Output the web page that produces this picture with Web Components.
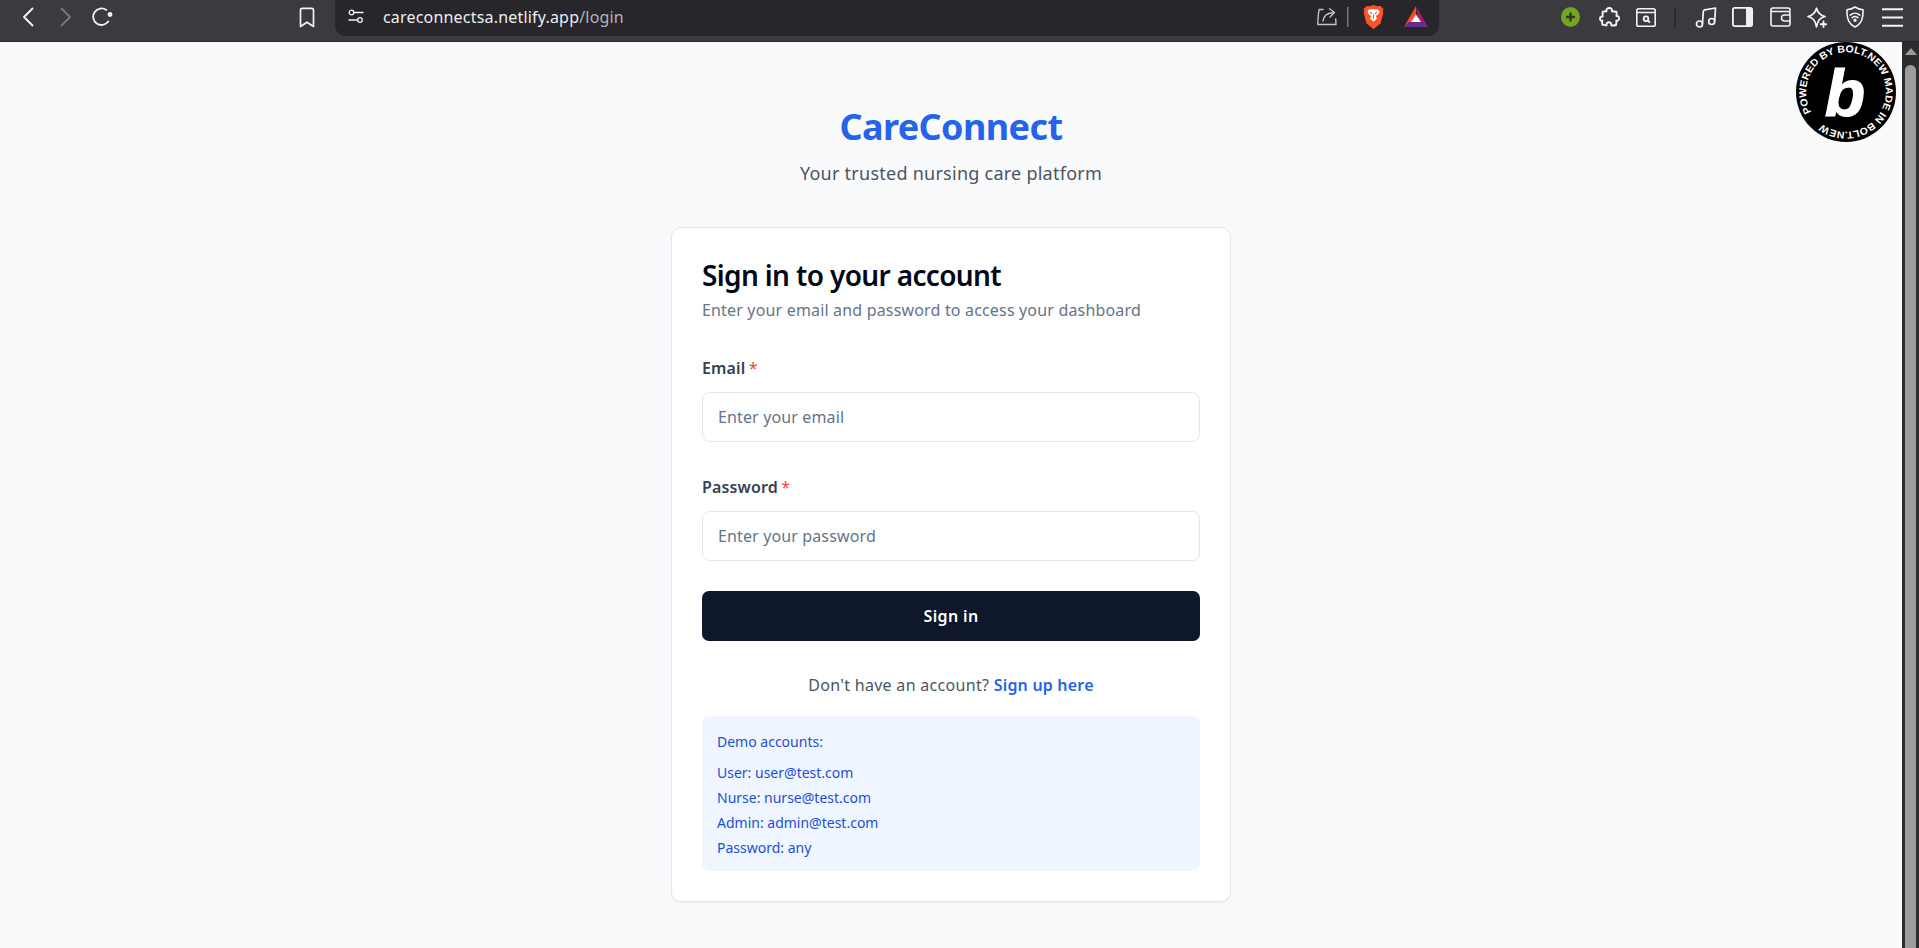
<!DOCTYPE html>
<html lang="en"><head><meta charset="utf-8"><title>CareConnect</title>
<style>
html,body{margin:0;height:948px;overflow:hidden;background:#f9fafb}
body{font-family:"Noto Sans","Open Sans",sans-serif}
</style></head><body>
<app-shell>
  <browser-toolbar slot="toolbar" url="careconnectsa.netlify.app" path="/login"></browser-toolbar>
  <login-page>
    <login-card heading="Sign in to your account" description="Enter your email and password to access your dashboard">
      <form-field label="Email" placeholder="Enter your email"></form-field>
      <form-field label="Password" placeholder="Enter your password"></form-field>
      <primary-button>Sign in</primary-button>
      <signup-prompt></signup-prompt>
      <demo-accounts></demo-accounts>
    </login-card>
  </login-page>
  <page-scrollbar slot="scroll"></page-scrollbar>
  <bolt-badge slot="badge"></bolt-badge>
</app-shell>
<script>
function def(name,html){
  customElements.define(name,class extends HTMLElement{
    connectedCallback(){
      if(this.shadowRoot)return;
      const r=this.attachShadow({mode:'open'});
      r.innerHTML=typeof html==='function'?html(this):html;
    }
  });
}
const S='fill="none" stroke="currentColor" stroke-linecap="round" stroke-linejoin="round"';
def('app-shell',`<style>
:host{display:grid;grid-template-rows:42px 906px;grid-template-columns:1fr 17px;width:1919px;height:948px;position:relative}
.top{grid-column:1/3}
.badge{position:absolute;left:1796px;top:42px}
</style>
<div class="top"><slot name="toolbar"></slot></div>
<div><slot></slot></div>
<slot name="scroll"></slot>
<div class="badge"><slot name="badge"></slot></div>`);

def('browser-toolbar',h=>`<style>
:host{display:flex;height:41px;background:#3a3a3f;border-bottom:1px solid #2a2a2e;color:#f4f4f6;font-family:"Noto Sans",sans-serif}
svg{display:block;flex:none}
.nav{display:flex;align-items:center;width:335px;height:34px;flex:none}
.bar{display:flex;align-items:center;width:1104px;height:36px;flex:none;background:#26262b;border-radius:0 0 11px 11px;box-sizing:border-box;padding-bottom:3px}
.url{margin-left:19px;font-size:16px;letter-spacing:.19px;color:#eeeef0;white-space:nowrap;line-height:24px}
.url span{color:#b4b4ba}
.sp{flex:1}
.exts{display:flex;align-items:center;height:34px;flex:1}
</style>
<div class="nav">
  <svg style="margin-left:22px" width="12" height="20" viewBox="0 0 12 20" ${S} stroke-width="1.900"><path d="M10.500 1.500 2 10l8.500 8.500"/></svg>
  <svg style="margin-left:26px;color:#77777c" width="12" height="20" viewBox="0 0 12 20" ${S} stroke-width="1.900"><path d="M1.500 1.500 10 10l-8.500 8.500"/></svg>
  <svg style="margin-left:20px" width="21" height="20" viewBox="0 0 21 20" ${S} stroke-width="1.800"><path d="M14.300 2.900A8.300 8.300 0 1 0 16.300 14.500"/><circle cx="18" cy="7.500" r="2.400" fill="currentColor" stroke="none"/></svg>
  <svg style="margin-left:186px" width="16" height="21" viewBox="0 0 16 21" ${S} stroke-width="1.700"><path d="M1.500 3.200c0-1 .8-1.800 1.800-1.800h9.400c1 0 1.800.8 1.800 1.800v16.300L8 15.300 1.500 19.500z"/></svg>
</div>
<div class="bar">
  <svg style="margin-left:13px" width="16" height="15" viewBox="0 0 16 15" ${S} stroke-width="1.300"><circle cx="3.500" cy="3.500" r="2.300"/><path d="M6 3.500h9"/><circle cx="12" cy="11" r="2.300"/><path d="M1 11h8.500"/></svg>
  <div class="url">${h.getAttribute('url')}<span>${h.getAttribute('path')}</span></div>
  <div class="sp"></div>
  <svg style="color:#c4c4c8" width="20" height="18" viewBox="0 0 20 18" ${S} stroke-width="1.400"><path d="M6 1.500H2.200C1.400 4.500 1 8 .8 16.500H19l-.3-5.500"/><path d="M6 13c.5-4.500 3.500-8 10-8.300"/><path d="M12.500 .8 17.500 4.500 13 9"/></svg>
  <svg style="margin-left:10px;color:#77777c" width="2" height="20" viewBox="0 0 2 20"><rect width="1.500" height="20" fill="currentColor"/></svg>
  <svg style="margin-left:14px" width="21" height="24" viewBox="0 0 21 24"><path d="M10.500 0 14.500 1.300 17.500 1 20.500 4 19.800 6 20.300 8 17.500 18.500 12.500 22.500 10.500 24 8.500 22.500 3.500 18.500 .7 8 1.200 6 .5 4 3.500 1 6.500 1.300z" fill="#fb542b"/><path d="M10.500 4c2 .6 3 .3 4.300.3l1.700 2-.9 2.700-2.300 1.500-.6 1.200 1.500 1.300-2 2.300-1.700 1.200-1.700-1.200-2-2.300 1.500-1.300-.6-1.200L5.400 9l-.9-2.700 1.700-2C7.500 4.300 8.500 4.600 10.500 4z" fill="#fff"/><path d="M7 7.600 9.300 8.800M14 7.600 11.700 8.800M10.500 9.500v4" stroke="#fb542b" stroke-width="1.100" fill="none"/></svg>
  <svg style="margin-left:20px" width="24" height="21" viewBox="0 0 24 21"><path d="M12 0 24 21H15z" fill="#9e1f63"/><path d="M12 0 0 21h7.500L12 12z" fill="#ff4724"/><path d="M0 21h24l-4.500-5H4.500z" fill="#662d91"/><path d="M12 8.500 17 16H7z" fill="#fff"/></svg>
  <div style="width:11px"></div>
</div>
<div class="exts">
  <svg style="margin-left:122px" width="19" height="20" viewBox="0 0 19 20"><ellipse cx="9.500" cy="10" rx="9.500" ry="10" fill="#74a422"/><path d="M9.500 5.500v9M5 10h9" stroke="#2f3a22" stroke-width="2.400"/></svg>
  <svg style="margin-left:19px" width="21" height="21" viewBox="0 0 21 21" ${S} stroke-width="1.900"><path d="M7.500 4.300C6.800 2.300 8.500 1 10.300 1s3.300 1.300 2.600 3.300c1.600.2 3.200.2 4.500.4.300 1.500.3 3 .1 4.400 1.600-.4 2.600.9 2.600 2.200s-1 2.700-2.800 2.300c.2 1.500.1 2.900-.3 4.400-1.300.5-3 .6-4.800.3.500-1.900-.8-3-2.300-3-1.500 0-2.800 1.100-2.300 3-1.300 0-2.800-.1-4.200-.6-.3-1.500-.3-2.800-.1-4.200C2 14.200 1 13 1 11.700s1-2.600 2.700-2.200c-.2-1.700-.2-3.200.1-4.800 1.200-.3 2.500-.4 3.700-.4z"/></svg>
  <svg style="margin-left:16px" width="20" height="19" viewBox="0 0 20 19" ${S} stroke-width="1.600"><rect x=".8" y=".8" width="18.400" height="17.400" rx="1.800"/><path d="M1 4.500h18"/><circle cx="10" cy="10.700" r="2.300" stroke-width="1.800"/><path d="M11.800 12.500 13.500 14.200" stroke-width="1.800"/></svg>
  <svg style="margin-left:18px;color:#2b2b2f" width="2" height="19" viewBox="0 0 2 19"><rect width="2" height="19" fill="currentColor"/></svg>
  <svg style="margin-left:19px" width="22" height="21" viewBox="0 0 22 21" ${S} stroke-width="1.700"><circle cx="4.500" cy="17" r="3"/><circle cx="16.700" cy="14.500" r="3"/><path d="M7.500 16.500 8.300 4.500c.1-1 .6-1.500 1.500-1.700L20.500 1l-.8 13"/></svg>
  <svg style="margin-left:15px" width="21" height="20" viewBox="0 0 21 20"><rect x=".9" y=".9" width="19.200" height="18.200" rx="1.800" fill="none" stroke="currentColor" stroke-width="1.800"/><path d="M14 1h5a1 1 0 0 1 1 1v16a1 1 0 0 1-1 1h-5z" fill="#eee"/></svg>
  <svg style="margin-left:17px" width="21" height="20" viewBox="0 0 21 20" ${S} stroke-width="1.600"><path d="M20 4V3c0-1.200-.8-2-2-2H3C1.800 1 1 1.800 1 3v14c0 1.200.8 2 2 2h15c1.200 0 2-.8 2-2v-3"/><path d="M1 4.500h17c1.200 0 2 .8 2 2V14h-5.500a3 3 0 0 1-3-3 3 3 0 0 1 3-3H20"/></svg>
  <svg style="margin-left:16px" width="21" height="21" viewBox="0 0 21 21" ${S} stroke-width="1.700"><path d="M9.500 1.200C10.800 6 12.800 8.200 18 9.500 12.800 11 10.800 13.300 9.500 19.800 8.200 13.300 6.200 11 1 9.500 6.200 8.200 8.200 6 9.500 1.200z"/><path d="M16.500 14.500v5.500M13.700 17.200h5.500" stroke-width="1.900"/></svg>
  <svg style="margin-left:18px" width="18" height="22" viewBox="0 0 18 22" ${S} stroke-width="1.600"><path d="M9 1c2.500 1.600 5 2.400 8 2.700.3 8-1 13.600-8 17.300C2 17.300.7 11.700 1 3.700 4 3.400 6.500 2.600 9 1z"/><path d="M4.300 9.200c2.800-2.600 6.600-2.600 9.400 0M6.200 11.700c1.700-1.500 3.900-1.500 5.600 0"/><circle cx="9" cy="14.300" r=".9" fill="currentColor"/></svg>
  <svg style="margin-left:18px" width="21" height="19" viewBox="0 0 21 19"><path d="M0 1.200h21M0 9.500h21M0 17.800h21" stroke="currentColor" stroke-width="1.900"/></svg>
</div>`);

def('login-page',`<style>
:host{display:flex;flex-direction:column;align-items:center;height:906px;box-sizing:border-box;padding-top:61px;background:#f9fafb;overflow:hidden}
h1{margin:0;font:700 36px/48px "Noto Sans",sans-serif;letter-spacing:-.6px;color:#2563eb}
p{margin:8px 0 40px;font:400 18px/28px "Noto Sans",sans-serif;letter-spacing:.25px;color:#4b5563}
</style><h1>CareConnect</h1><p>Your trusted nursing care platform</p><slot></slot>`);

def('login-card',h=>`<style>
:host{display:block;width:560px;box-sizing:border-box;padding:30px;background:#fff;border:1px solid #e5e7eb;border-radius:10px;box-shadow:0 1px 2px rgba(0,0,0,.06)}
h2{margin:0;font:600 28px/34px "Noto Sans",sans-serif;letter-spacing:-.64px;color:#020817}
p{margin:5px 0 32px;font:400 16px/26px "Noto Sans",sans-serif;letter-spacing:.17px;color:#64748b}
.form{display:flex;flex-direction:column;gap:32px}
</style><h2>${h.getAttribute('heading')}</h2><p>${h.getAttribute('description')}</p><div class="form"><slot></slot></div>`);

def('form-field',h=>`<style>
:host{display:block}
label{display:block;font:600 16px/26px "Noto Sans",sans-serif;letter-spacing:.15px;color:#374151;margin-bottom:11px}
label span{color:#ef4444;font-weight:400;margin-left:-1px}
input{display:block;box-sizing:border-box;width:100%;height:50px;padding:0 15px;background:#fff;border:1px solid #e2e8f0;border-radius:8px;font:400 16px "Noto Sans",sans-serif;letter-spacing:.13px;color:#111827;outline:none}
input::placeholder{color:#64748b;opacity:1}
</style><label>${h.getAttribute('label')} <span>*</span></label><input placeholder="${h.getAttribute('placeholder')}">`);

def('primary-button',`<style>
:host{display:block;margin-top:-2px}
button{display:block;width:100%;height:50px;border:0;border-radius:7px;background:#0f172a;color:#fff;font:600 16px "Noto Sans",sans-serif;letter-spacing:.36px;padding:0}
</style><button><slot></slot></button>`);

def('signup-prompt',`<style>
:host{display:block;margin-top:-1px;text-align:center;font:400 16px/26px "Noto Sans",sans-serif;letter-spacing:.3px;color:#4b5563}
a{color:#2563eb;font-weight:600;text-decoration:none;letter-spacing:.2px}
</style>Don't have an account? <a href="#">Sign up here</a>`);

def('demo-accounts',`<style>
:host{display:block;margin-top:-14px;box-sizing:border-box;height:155px;padding:15px 15px 0;border-radius:8px;background:#eff6ff;color:#1d4ed8;font:400 14px/25px "Noto Sans",sans-serif}
.h{line-height:22px;margin-bottom:7px}
</style><div class="h">Demo accounts:</div><div>User: user@test.com</div><div>Nurse: nurse@test.com</div><div>Admin: admin@test.com</div><div>Password: any</div>`);

def('page-scrollbar',`<style>
:host{display:flex;flex-direction:column;align-items:center;height:906px;background:#2c2c2e;overflow:hidden}
.arrow{width:0;height:0;margin-top:6px;border:6px solid transparent;border-top:0;border-bottom:7px solid #9a9a9a}
.thumb{flex:1;width:11px;margin-top:10px;border-radius:6px 6px 0 0;background:#9c9c9c}
</style><div class="arrow"></div><div class="thumb"></div>`);

def('bolt-badge',`<style>
:host{display:block;width:100px;height:100px}
svg{display:block}
text{fill:#fff;font-family:"Liberation Sans",sans-serif}
.ring{font-size:10px;font-weight:700}
.b{font-size:66px;font-weight:700;font-style:italic;stroke:#fff;stroke-width:1.200px}
</style>
<svg width="100" height="100" viewBox="0 0 100 100">
  <circle cx="50" cy="50" r="50" fill="#000"/>
  <defs><path id="ring" d="M15.360 70A40 40 0 0 1 84.640 30A40 40 0 0 1 15.360 70"/></defs>
  <text class="ring"><textPath href="#ring" textLength="234" lengthAdjust="spacingAndGlyphs">POWERED BY BOLT.NEW MADE IN BOLT.NEW</textPath></text>
  <text class="b" x="49" y="74" text-anchor="middle">b</text>
</svg>`);
</script>
</body></html>
